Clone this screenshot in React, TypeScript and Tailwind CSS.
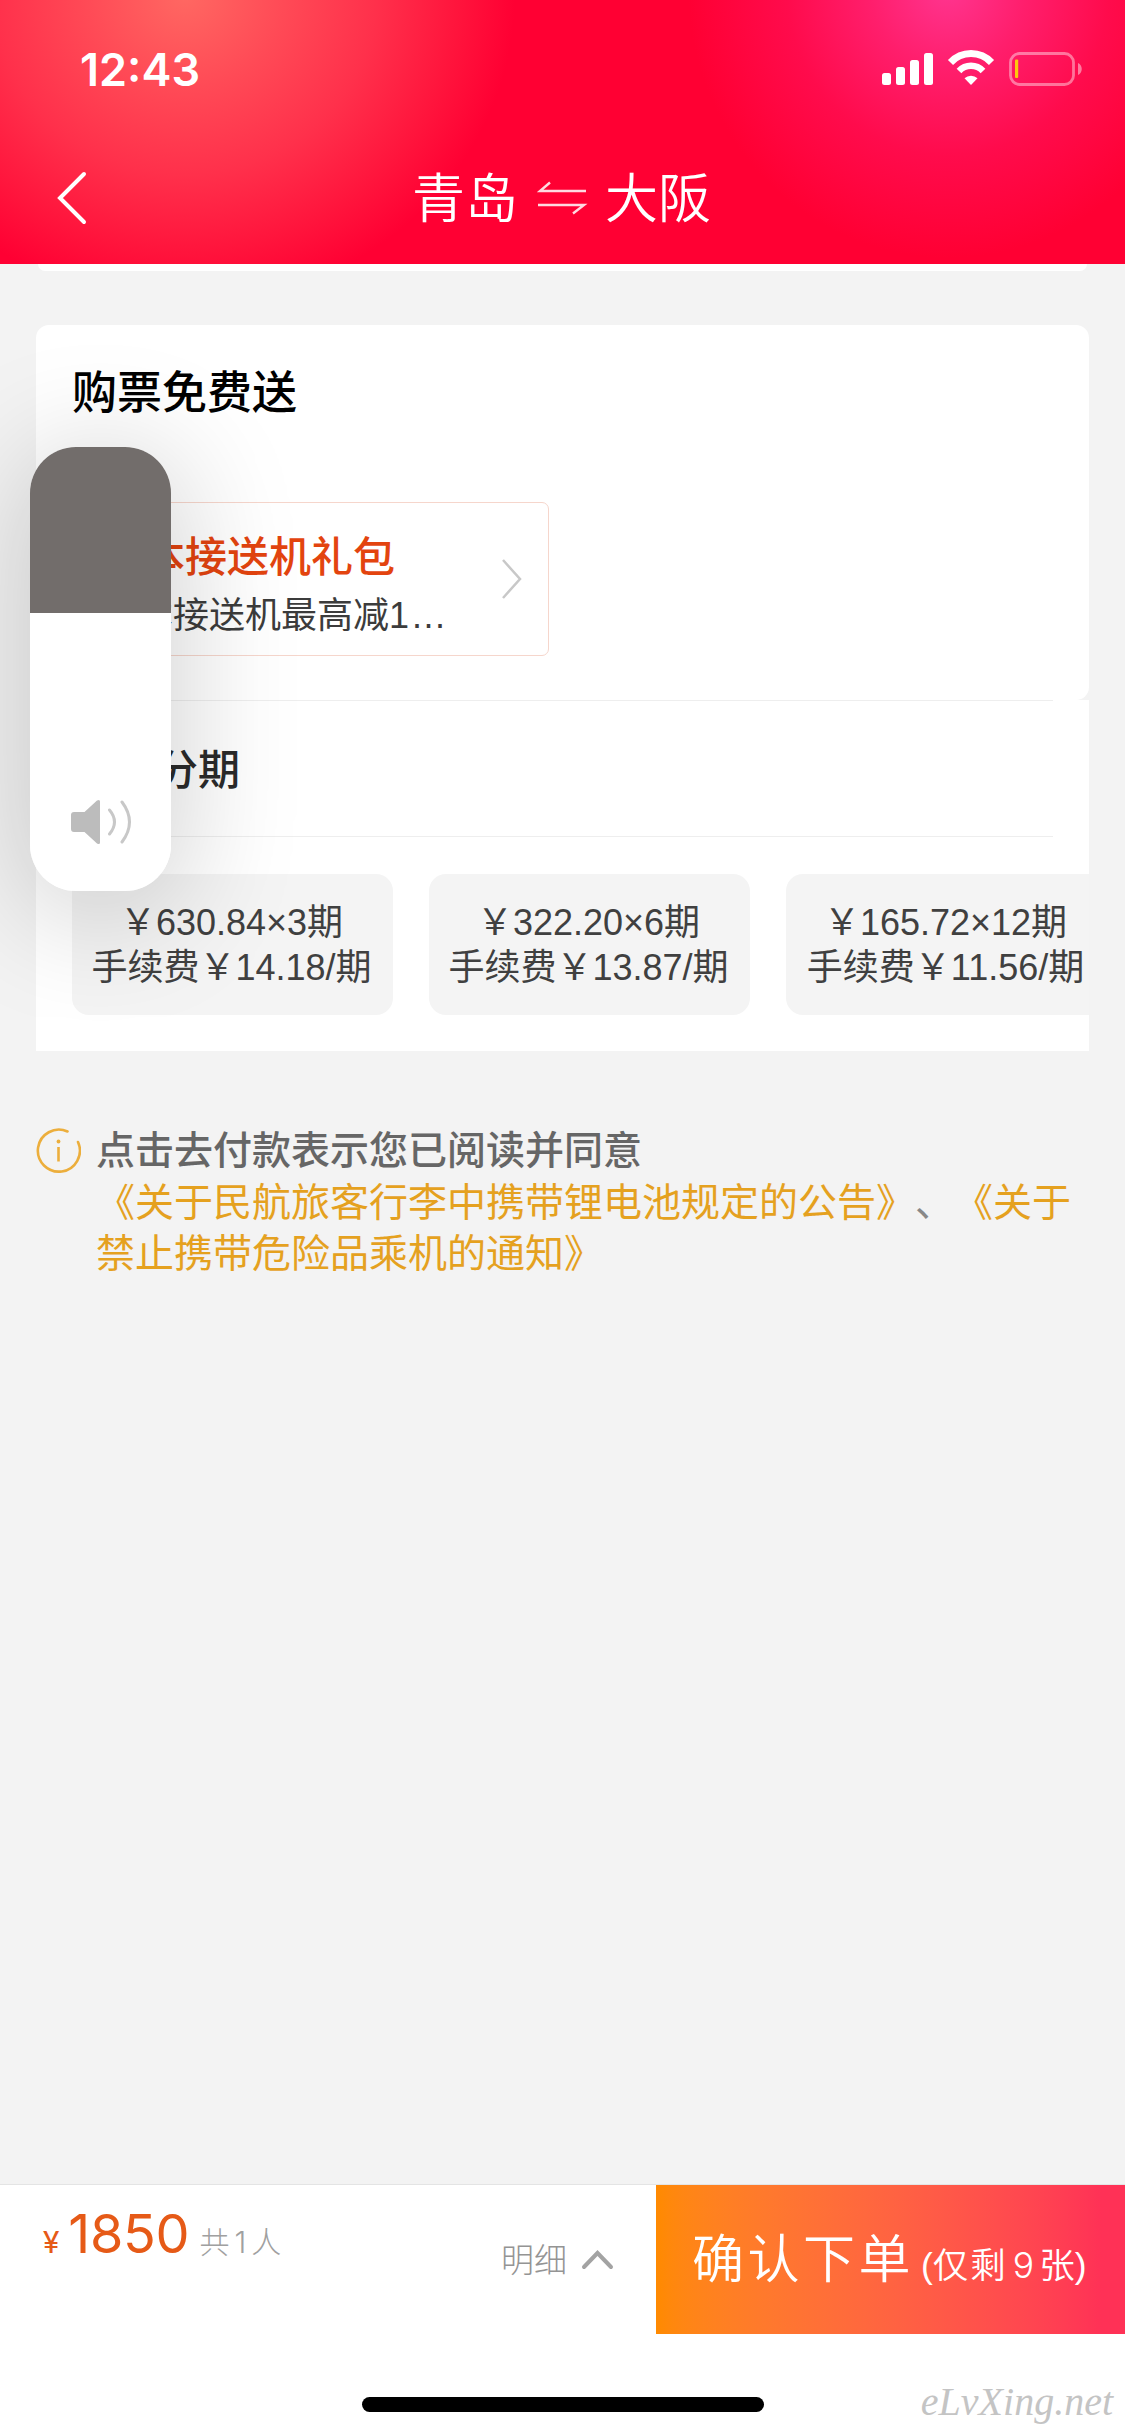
import React from 'react';

interface InstallmentPlan {
  amount: string;
  fee: string;
}

const PLANS: InstallmentPlan[] = [
  { amount: '￥630.84×3期', fee: '手续费￥14.18/期' },
  { amount: '￥322.20×6期', fee: '手续费￥13.87/期' },
  { amount: '￥165.72×12期', fee: '手续费￥11.56/期' },
];

/**
 * Signal, wifi and low battery
 */
const StatusIcons: React.FC = () => (
  <svg className="h-[40px] w-[204px]" viewBox="0 0 204 40" fill="none">
    <g fill="#fff">
      <rect x="2" y="24" width="9" height="12" rx="2.5" />
      <rect x="16" y="18" width="9" height="18" rx="2.5" />
      <rect x="30" y="11" width="9" height="25" rx="2.5" />
      <rect x="44" y="4" width="9" height="32" rx="2.5" />
    </g>
    <path d="M70.5 13.5a28 28 0 0 1 41 0" stroke="#fff" strokeWidth="7" />
    <path d="M79 22a16.500 16.500 0 0 1 24 0" stroke="#fff" strokeWidth="6.500" />
    <path d="M91 36l-6.500-6.800a9.500 9.500 0 0 1 13 0z" fill="#fff" />
    <rect x="130.500" y="4.500" width="63" height="31" rx="9" stroke="#fff" strokeOpacity="0.42" strokeWidth="2.800" />
    <rect x="135" y="10.500" width="3.200" height="18.500" rx="1" fill="#fdc80f" />
    <path d="M198 14c5 2 5 10 0 12z" fill="#fff" fillOpacity="0.45" />
  </svg>
);

const Header: React.FC = () => (
  <header className="flex h-[264px] shrink-0 flex-col bg-[#ff0033] bg-[radial-gradient(ellipse_330px_310px_at_185px_-5px,#ff6862_0%,#ff4a56_30%,#ff304b_58%,#ff143c_83%,#ff003300_100%),radial-gradient(ellipse_260px_270px_at_948px_-12px,#ff3590_0%,#ff1e6c_30%,#ff0b4c_62%,#ff003300_100%)] text-white">
    <div className="flex h-[138px] items-center justify-between pl-[80px] pr-[41px]">
      <span className="font-['Inter',sans-serif] text-[45px] font-semibold leading-none">
        12:43
      </span>
      <StatusIcons />
    </div>
    <div className="flex h-[120px] items-center">
      <svg className="ml-[55px] h-[60px] w-[34px]" viewBox="0 0 34 60" fill="none">
        <path d="M29 6L5 30l24 24" stroke="#fff" strokeWidth="4" strokeLinecap="round" />
      </svg>
      <h1 className="ml-[323px] mt-[3px] flex items-center text-[53px] font-[350] leading-[60px]">
        <span>青岛</span>
        <svg className="-mt-[3px] mr-[17px] ml-[18px] h-[36px] w-[52px]" viewBox="0 0 52 36" fill="none">
          <path d="M50 11H4L14 2.500M2 25h46L37 33.500" stroke="#fff" strokeWidth="2.400" strokeOpacity="0.85" />
        </svg>
        <span>大阪</span>
      </h1>
    </div>
  </header>
);

/**
 * Gift card offered with the ticket
 */
const GiftSection: React.FC = () => (
  <section className="h-[375px] shrink-0 rounded-[13px] bg-white px-[36px] pt-[39px]">
    <h2 className="text-[45px] font-medium leading-[60px] text-black">购票免费送</h2>
    <div className="mt-[78px] flex h-[154px] w-[477px] items-center justify-between rounded-[7px] border-[1.500px] border-[#f6d6cc] pl-[28px] pr-[24px]">
      <div className="pt-[13px] text-nowrap">
        <div className="text-[42px] font-medium leading-[60px] text-[#e3440f]">日本接送机礼包</div>
        <div className="text-[36px] leading-[56px] text-[#3c3c3c]">
          日本接送机最高减1<span className="ml-[3px] tracking-[1.500px]">...</span>
        </div>
      </div>
      <svg className="h-[44px] w-[24px] shrink-0" viewBox="0 0 24 44" fill="none">
        <path d="M3 3l17 19L3 41" stroke="#c8c8c8" strokeWidth="2.500" />
      </svg>
    </div>
  </section>
);

const InstallmentSection: React.FC = () => (
  <section className="h-[351px] shrink-0 overflow-hidden bg-white pl-[36px]">
    <div className="mr-[36px] flex h-[137px] items-center border-y-[1.500px] border-[#eeeeee] pl-[84px]">
      <h2 className="pt-[4px] text-[42px] font-medium leading-[60px] text-[#2b2b2b]">分期</h2>
    </div>
    <div className="mt-[37px] flex gap-[36px]">
      {PLANS.map((plan) => (
        <div
          key={plan.amount}
          className="flex h-[141px] w-[321px] shrink-0 flex-col items-center justify-center text-nowrap rounded-[17px] bg-[#f4f4f4] pr-[2px] text-[36px] leading-[45px] text-[#404040]"
        >
          <span>{plan.amount}</span>
          <span>{plan.fee}</span>
        </div>
      ))}
    </div>
  </section>
);

const Notice: React.FC = () => (
  <section className="mt-[74px] flex px-[36px]">
    <svg className="mt-[3px] h-[45px] w-[45px] shrink-0" viewBox="0 0 45 45" fill="none">
      <path d="M31.500 3.500A21 21 0 1 0 42 14" stroke="#ecae3c" strokeWidth="2.600" strokeLinecap="round" />
      <circle cx="22.500" cy="13.500" r="1.900" fill="#ecae3c" />
      <path d="M22.500 19v14.500" stroke="#ecae3c" strokeWidth="2.600" />
    </svg>
    <div className="ml-[15px] w-[992px] text-nowrap text-[39px] leading-[51.500px] text-[#e5a11f] [text-spacing-trim:space-all]">
      <p className="font-medium text-[#666]">点击去付款表示您已阅读并同意</p>
      <p className="flex">
        <span>《关于民航旅客行李中携带锂电池规定的公告》</span>
        <span className="text-[#888]">、</span>
        <span>《关于</span>
      </p>
      <p>禁止携带危险品乘机的通知》</p>
    </div>
  </section>
);

const Footer: React.FC = () => (
  <footer className="mt-auto h-[252px] shrink-0 bg-white">
    <div className="flex h-[150px] border-t border-[#e4e4e4]">
      <div className="flex items-baseline pl-[43px] pt-[17px]">
        <span className="font-['Roboto',sans-serif] text-[31px] text-[#e65a17]">¥</span>
        <span className="ml-[9px] font-['Inter',sans-serif] text-[54px] leading-[64px] tracking-[-0.300px] text-[#e65a17]">1850</span>
        <span className="ml-[10px] text-[30px] font-light text-[#a0a0a0]">
          共<span className="mx-[5px] font-['Inter',sans-serif]">1</span>人
        </span>
      </div>
      <div className="ml-auto flex items-center pr-[42px] pt-[2px] text-[33px] font-light text-[#949494]">
        明细
        <svg className="-mt-[2px] ml-[14px] h-[22px] w-[33px]" viewBox="0 0 33 22" fill="none">
          <path d="M3 18L16.500 4 30 18" stroke="#a3a3a3" strokeWidth="4" strokeLinecap="round" />
        </svg>
      </div>
      <button className="flex w-[469px] items-baseline text-nowrap bg-linear-to-r from-[#ff8a00] to-[#ff3156] to-95% pl-[36px] text-left text-white">
        <span className="text-[52px] font-[350] leading-[150px] tracking-[3.500px]">确认下单</span>
        <span className="ml-[7px] text-[35.500px] font-[350]">
          (<span className="tracking-[2px]">仅剩</span>
          <span className="mx-[5px] font-['Inter',sans-serif]">9</span>张)
        </span>
      </button>
    </div>
    <div className="relative flex h-[102px] justify-center pt-[63px]">
      <div className="h-[15px] w-[402px] rounded-full bg-black" />
      <span className="absolute right-[12px] top-[44px] font-['Liberation_Serif',serif] text-[40px] italic leading-[48px] text-[#c4c4c4]">
        eLvXing.net
      </span>
    </div>
  </footer>
);

/**
 * System volume slider, floats over the page
 */
const VolumeHud: React.FC = () => (
  <div className="absolute left-[30px] top-[447px] h-[444px] w-[141px] rounded-[46px] shadow-[0_16px_120px_10px_rgba(0,0,0,0.18)]">
    <div className="flex h-full flex-col overflow-hidden rounded-[46px] bg-white">
      <div className="h-[166px] bg-[#726d6b]" />
      <svg className="ml-[39px] mt-[184px] h-[50px] w-[66px]" viewBox="0 0 66 50" fill="none">
        <path
          d="M5 15h10.500L28 3.500q3-1.500 3 1v41q0 2.500-3 1L15.500 35H5q-3 0-3-3V18q0-3 3-3z"
          fill="#bcbcbc"
        />
        <path d="M40.500 13q10 12 0 24M53 5q15 20 0 40" stroke="#c8c8c8" strokeWidth="3" strokeLinecap="round" />
      </svg>
    </div>
  </div>
);

export default function App() {
  return (
    <div className="relative flex h-[2436px] w-[1125px] flex-col overflow-hidden bg-[#f3f3f3] font-['Liberation_Sans','Noto_Sans_CJK_SC',sans-serif]">
      <Header />
      <main className="flex flex-col">
        {/* bottom edge of the card scrolled under the header */}
        <div className="mx-[38px] h-[7px] rounded-b-[7px] bg-white" />
        <div className="mx-[36px] mt-[54px] flex flex-col">
          <GiftSection />
          <InstallmentSection />
        </div>
        <Notice />
      </main>
      <Footer />
      <VolumeHud />
    </div>
  );
}
